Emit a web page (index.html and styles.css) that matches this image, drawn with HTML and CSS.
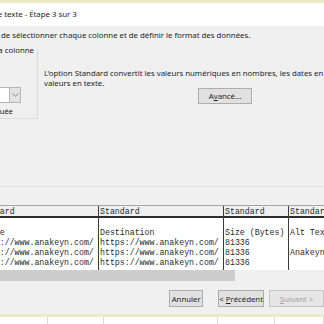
FILE: index.html
```html
<!DOCTYPE html>
<html lang="fr">
<head>
    <meta charset="UTF-8">
    <meta name="viewport" content="width=device-width, initial-scale=1.0">
    <title>Assistant Importation de texte - Étape 3 sur 3</title>
    <link rel="stylesheet" href="styles.css">
</head>
<body>
    <div class="edge"></div>
    <div class="titlebar"><span class="title">de texte - Étape 3 sur 3</span></div>

    <div class="dialog">
        <p class="intro">de sélectionner chaque colonne et de définir le format des données.</p>

        <div class="format-row">
            <div class="format-box">
                <div class="legend">Format des données de la colonne</div>
                <div class="combo">
                    <div class="combo-field"></div>
                    <div class="combo-btn">
                        <svg width="7" height="4" viewBox="0 0 7 4"><path d="M0.5 0.5 L3.5 3.2 L6.5 0.5" fill="none" stroke="#7a7a7a" stroke-width="0.9"/></svg>
                    </div>
                </div>
                <div class="skip">Colonne non distribuée</div>
            </div>
            <div class="format-info">
                <p class="info-line">L'option Standard convertit les valeurs numériques en nombres, les dates en dates et toutes les autres</p>
                <p class="info-line">valeurs en texte.</p>
                <button class="btn btn-adv">A<u>v</u>ancé...</button>
            </div>
        </div>

        <div class="preview">
            <div class="grid">
                <div class="col col-a">
                    <div class="head">Standard</div>
                    <div class="cell"></div>
                    <div class="cell">Source</div>
                    <div class="cell">https://www.anakeyn.com/</div>
                    <div class="cell">https://www.anakeyn.com/</div>
                    <div class="cell">https://www.anakeyn.com/</div>
                    <div class="fill"></div>
                </div>
                <div class="col col-b">
                    <div class="head">Standard</div>
                    <div class="cell"></div>
                    <div class="cell">Destination</div>
                    <div class="cell">https://www.anakeyn.com/</div>
                    <div class="cell">https://www.anakeyn.com/</div>
                    <div class="cell">https://www.anakeyn.com/</div>
                    <div class="fill"></div>
                </div>
                <div class="col col-c">
                    <div class="head">Standard</div>
                    <div class="cell"></div>
                    <div class="cell">Size (Bytes)</div>
                    <div class="cell">81336</div>
                    <div class="cell">81336</div>
                    <div class="cell">81336</div>
                    <div class="fill"></div>
                </div>
                <div class="col col-d">
                    <div class="head">Standard</div>
                    <div class="cell"></div>
                    <div class="cell">Alt Text</div>
                    <div class="cell"></div>
                    <div class="cell">Anakeyn</div>
                    <div class="cell"></div>
                    <div class="fill"></div>
                </div>
            </div>
            <div class="hscroll"><div class="thumb"></div></div>
        </div>

        <div class="buttons">
            <button class="btn btn-cancel">Annuler</button>
            <button class="btn btn-prev">&lt; <u>P</u>récédent</button>
            <button class="btn btn-next" disabled><u>S</u>uivant &gt;</button>
        </div>
    </div>

    <div class="edge edge-bottom"></div>
    <div class="sheet">
        <div class="sheet-cell w1"></div>
        <div class="sheet-cell w2"></div>
        <div class="sheet-cell w3"></div>
        <div class="sheet-cell w4"></div>
        <div class="sheet-cell"></div>
    </div>
</body>
</html>
```

FILE: styles.css
```css
body {
    margin: 0;
    width: 324px;
    height: 324px;
    overflow: hidden;
    background-color: #f0f0f0;
    font-family: 'Noto Sans', 'DejaVu Sans', sans-serif;
    font-size: 7.8px;
    color: #1e1e1e;
}

p {
    margin: 0;
}

.edge {
    height: 3px;
    background-color: #eee9c8;
}

.titlebar {
    height: 23px;
    line-height: 23px;
    background-color: #fff;
    white-space: nowrap;
    text-indent: -7px;
}

.dialog {
    height: 288px;
    overflow: hidden;
}

.intro {
    padding: 4px 0 0 1px;
    line-height: 10px;
    white-space: nowrap;
}

.format-row {
    display: flex;
    margin-top: 10px;
}

/* group box is wider than the crop, its right part is what shows */
.format-box {
    box-sizing: border-box;
    width: 188px;
    height: 69px;
    margin-left: -150px;
    flex-shrink: 0;
    border-right: 1px solid #dcdcdc;
    border-bottom: 1px solid #dcdcdc;
    text-align: right;
}

.legend {
    margin-top: -5px;
    padding-right: 3px;
    line-height: 10px;
    white-space: nowrap;
}

.combo {
    display: flex;
    justify-content: flex-end;
    margin: 32px 16px 0 0;
    height: 16px;
}

.combo-field {
    width: 40px;
    background-color: #fff;
    border: 1px solid #b5b5b5;
    border-right: none;
}

.combo-btn {
    box-sizing: border-box;
    width: 12px;
    background-color: #e3e3e3;
    border: 1px solid #b5b5b5;
    display: flex;
    align-items: center;
    justify-content: center;
}

.skip {
    margin-top: 3px;
    padding-right: 24px;
    line-height: 10px;
    white-space: nowrap;
}

.format-info {
    margin-left: 6px;
    padding-top: 18px;
    overflow: hidden;
    white-space: nowrap;
}

.info-line {
    line-height: 10px;
}

.btn {
    box-sizing: border-box;
    height: 17px;
    padding: 0;
    font-family: inherit;
    font-size: 7.8px;
    color: #1e1e1e;
    white-space: nowrap;
    background-color: #e1e1e1;
    border: 1px solid #adadad;
    border-radius: 0;
}

.btn-adv {
    display: block;
    width: 54px;
    height: 16px;
    margin-left: 154px;
}

.preview {
    margin-top: 67px;
    border-top: 1px solid #e2e2e2;
}

.grid {
    display: flex;
    margin: 18px 0 0 -26px;
    border-top: 1px solid #a5a5a5;
    font-family: 'Liberation Mono', 'Courier New', monospace;
    font-size: 8.25px;
    color: #2a2a2a;
    white-space: nowrap;
}

.col {
    box-sizing: border-box;
    flex-shrink: 0;
    border-right: 1px solid #3a3a3a;
    overflow: hidden;
}

.col-a, .col-b {
    width: 125px;
}

.col-c {
    width: 65px;
}

.col-d {
    width: 80px;
    border-right: none;
}

.head {
    height: 10px;
    line-height: 11px;
    padding-left: 1px;
    background-color: #f0f0f0;
    border-bottom: 2px solid #2e2e2e;
}

.cell {
    height: 10px;
    line-height: 10px;
    padding-left: 1px;
    background-color: #fff;
}

.fill {
    height: 2px;
    background-color: #fff;
}

.hscroll {
    height: 11px;
    background-color: #f0f0f0;
}

.thumb {
    width: 235px;
    height: 100%;
    background-color: #cdcdcd;
}

.buttons {
    display: flex;
    margin-top: 9px;
    padding-left: 169px;
}

.btn-cancel {
    width: 46px;
}

.btn-prev {
    width: 55px;
    margin-left: 15px;
}

.btn-next {
    width: 55px;
    margin-left: 5px;
    flex-shrink: 0;
    color: #a0a0a0;
    background-color: #e6e6e6;
    border-color: #c4c4c4;
}

.sheet {
    display: flex;
    height: 20px;
    background-color: #fff;
}

.sheet-cell {
    box-sizing: border-box;
    flex: 1;
    border-right: 1px solid #dadada;
}

.w1 { flex: none; width: 48px; }
.w2 { flex: none; width: 56px; }
.w3 { flex: none; width: 114px; }
.w4 { flex: none; width: 57px; }
```
